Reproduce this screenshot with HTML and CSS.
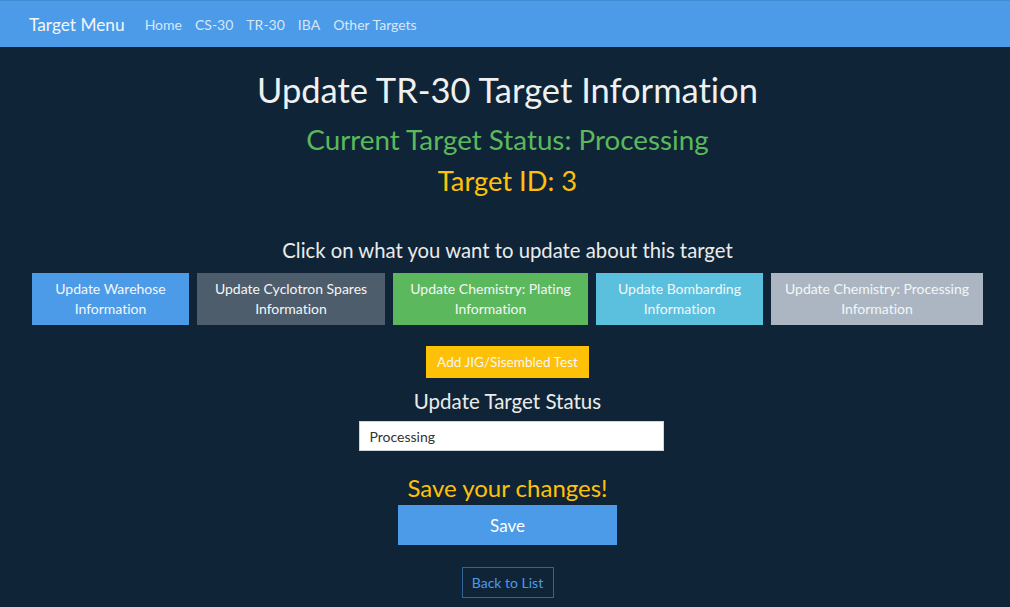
FILE: index.html
```html
<!DOCTYPE html>
<html lang="en">
<head>
<meta charset="utf-8">
<title>Update TR-30 Target</title>
<link rel="stylesheet" href="styles.css">
</head>
<body>
<nav class="navbar">
  <a class="brand" href="#">Target Menu</a>
  <ul class="nav-links">
    <li><a href="#">Home</a></li>
    <li><a href="#">CS-30</a></li>
    <li><a href="#">TR-30</a></li>
    <li><a href="#">IBA</a></li>
    <li><a href="#">Other Targets</a></li>
  </ul>
</nav>
<main class="content">
  <h1 class="title">Update TR-30 Target Information</h1>
  <h2 class="status">Current Target Status: Processing</h2>
  <h2 class="target-id">Target ID: 3</h2>
  <h4 class="prompt">Click on what you want to update about this target</h4>
  <div class="btn-row">
    <a class="btn btn-primary b1" href="#">Update Warehose Information</a>
    <a class="btn btn-secondary b2" href="#">Update Cyclotron Spares Information</a>
    <a class="btn btn-success b3" href="#">Update Chemistry: Plating Information</a>
    <a class="btn btn-info b4" href="#">Update Bombarding Information</a>
    <a class="btn btn-light b5" href="#">Update Chemistry: Processing Information</a>
  </div>
  <a class="btn btn-warning jig" href="#">Add JIG/Sisembled Test</a>
  <form class="status-form">
    <h4 class="label">Update Target Status</h4>
    <input class="field" type="text" value="Processing">
    <h3 class="save-note">Save your changes!</h3>
    <button class="save-btn" type="button">Save</button>
  </form>
  <a class="back" href="#">Back to List</a>
</main>
</body>
</html>
```

FILE: styles.css
```css
* { box-sizing: border-box; }
html, body { margin: 0; padding: 0; }
body {
  background: #0f2537;
  color: #ebebeb;
  font-family: Lato, "Open Sans", "Liberation Sans", sans-serif;
  font-size: 14px;
  font-variant-ligatures: none;
  height: 607px;
  overflow: hidden;
}
a { text-decoration: none; }

.navbar {
  display: flex;
  align-items: center;
  height: 47px;
  background: #4c9be8;
  border-top: 1px solid #3f8bd4;
  padding: 0 29px;
}
.brand {
  color: #f2f6fb;
  font-size: 17.3px;
  margin-right: 20px;
}
.nav-links {
  display: flex;
  list-style: none;
  margin: 0;
  padding: 0;
  gap: 13px;
}
.nav-links a {
  color: rgba(255,255,255,0.78);
  font-size: 14px;
}

.content {
  display: flex;
  flex-direction: column;
  align-items: center;
  text-align: center;
  padding-left: 5px;
}
.title {
  font-weight: 400;
  font-size: 34.5px;
  line-height: 1.2;
  margin: 22px 0 0;
  color: #f0f0f0;
}
.status {
  font-weight: 400;
  font-size: 27.8px;
  line-height: 1.2;
  margin: 13px 0 0;
  color: #5cb85c;
}
.target-id {
  font-weight: 400;
  font-size: 27.3px;
  line-height: 1.2;
  margin: 8px 0 0;
  color: #ffc107;
}
.prompt {
  font-weight: 400;
  font-size: 20.3px;
  line-height: 1.2;
  margin: 40.4px 0 0;
  color: #ebebeb;
}
.btn-row {
  display: flex;
  gap: 8px;
  margin-top: 11px;
}
.btn {
  display: flex;
  align-items: center;
  justify-content: center;
  color: #f4f6f8;
  font-size: 14px;
  line-height: 20px;
  text-align: center;
  padding: 6px 12px;
}
.btn-row .btn { height: 52px; }
.b1 { width: 157px; }
.b2 { width: 188px; }
.b3 { width: 195px; }
.b4 { width: 167px; }
.b5 { width: 212px; }
.btn-primary { background: #4c9be8; }
.btn-secondary { background: #4e5d6c; }
.btn-success { background: #5cb85c; }
.btn-info { background: #5bc0de; }
.btn-light { background: #abb6c2; }
.btn-warning { background: #ffc107; }
.jig {
  margin-top: 21px;
  height: 32px;
  width: 163px;
  font-size: 13.6px;
  padding: 0 6px;
}
.status-form {
  display: flex;
  flex-direction: column;
  align-items: center;
}
.label {
  font-weight: 400;
  font-size: 20.5px;
  line-height: 1.2;
  margin: 10.7px 0 0;
}
.field {
  margin-top: 7.7px;
  margin-left: 7px;
  width: 305px;
  height: 30px;
  border: 1px solid #ced4da;
  border-radius: 0;
  background: #fff;
  color: #333;
  font-family: Lato, "Open Sans", "Liberation Sans", sans-serif;
  font-size: 14px;
  padding: 0 10px;
}
.save-note {
  font-weight: 400;
  font-size: 24px;
  line-height: 1.2;
  margin: 22.6px 0 0;
  color: #ffc107;
}
.save-btn {
  margin-top: 2.6px;
  width: 219px;
  height: 40px;
  border: 0;
  background: #4c9be8;
  color: #fff;
  font-family: Lato, "Open Sans", "Liberation Sans", sans-serif;
  font-size: 17px;
}
.back {
  margin-top: 22px;
  height: 31px;
  width: 92px;
  display: flex;
  align-items: center;
  justify-content: center;
  border: 1px solid rgba(76,155,232,0.55);
  color: #4c9be8;
  font-size: 14px;
}
```
